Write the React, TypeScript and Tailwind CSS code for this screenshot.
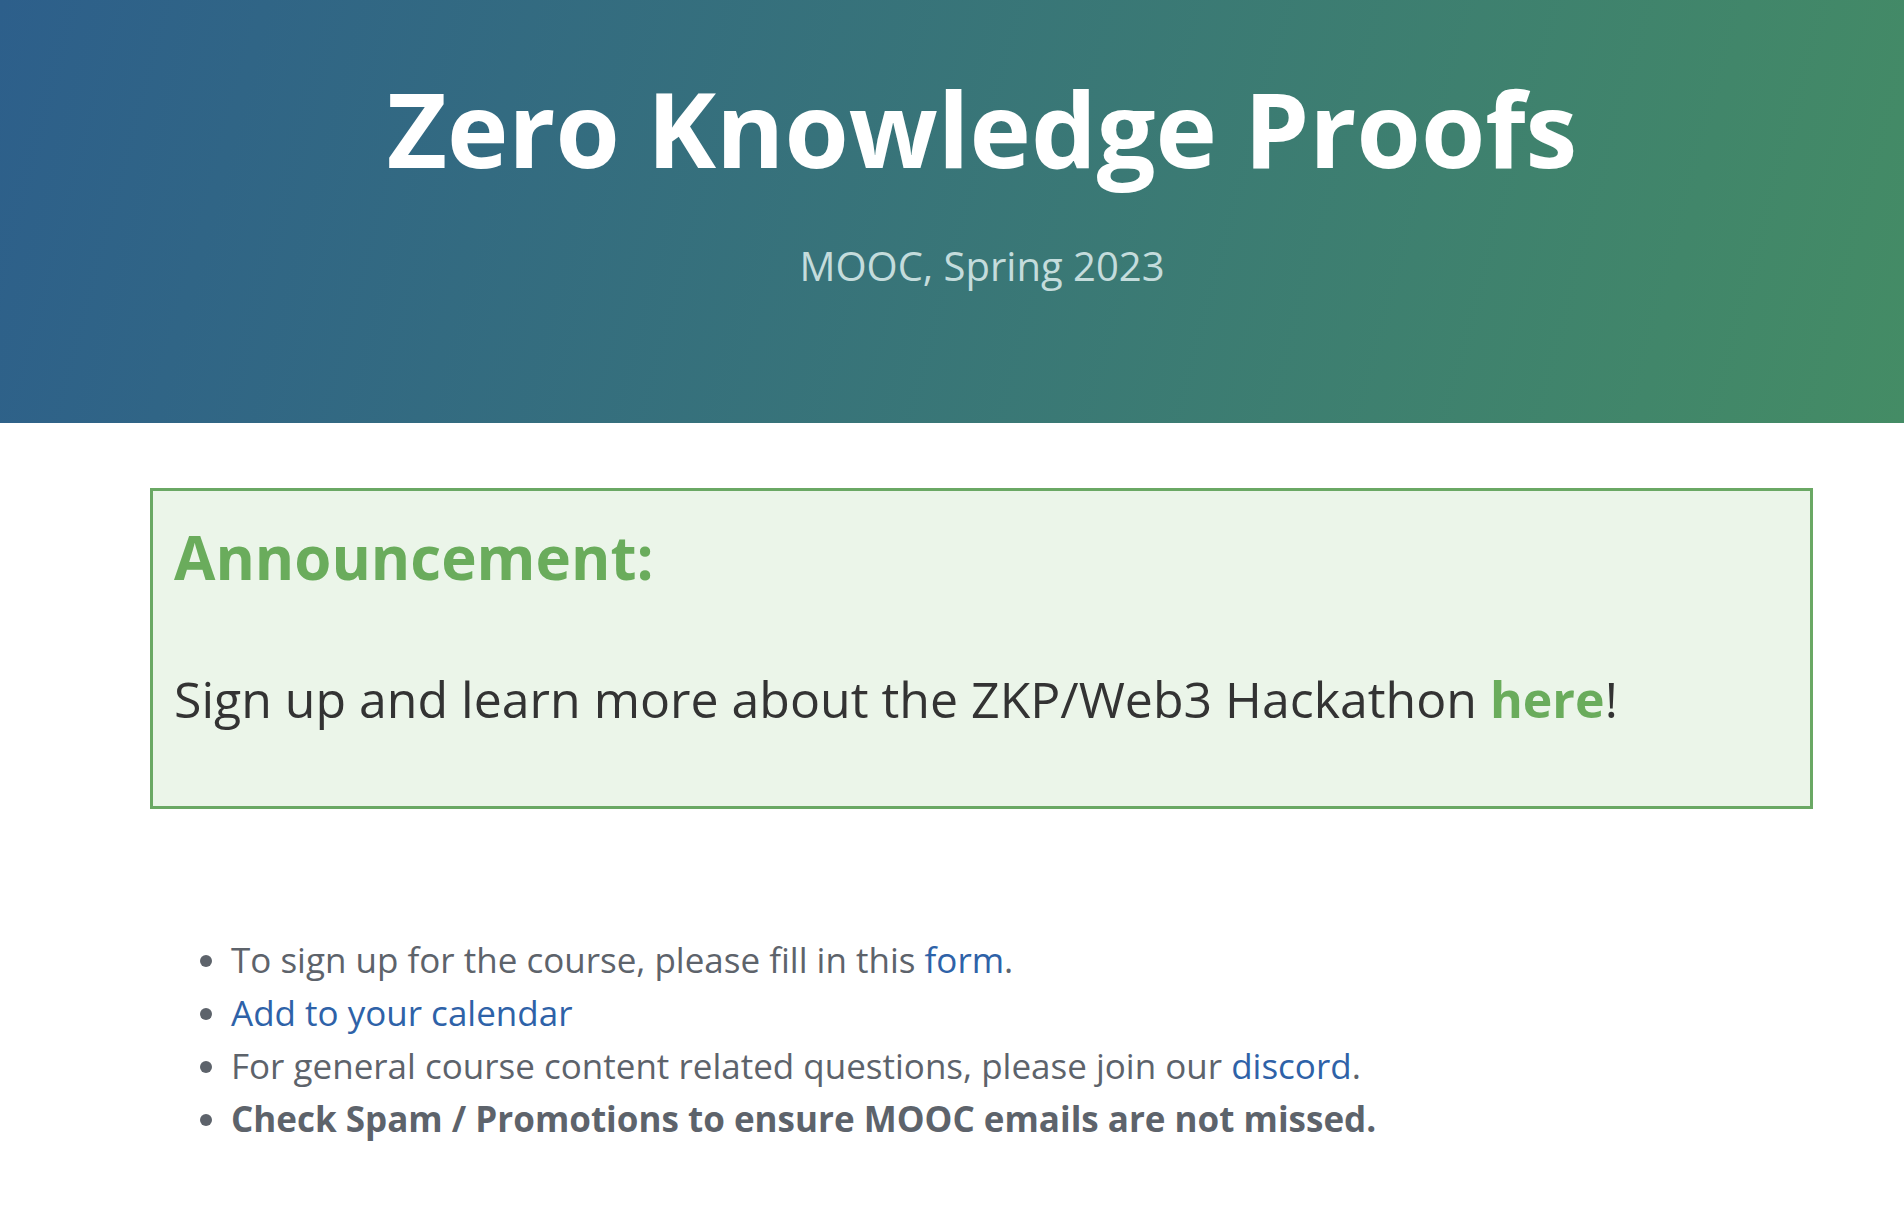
export default function App() {
    const font = { fontFamily: '"Open Sans", "Noto Sans", sans-serif' };

    return (
        <div className="min-h-screen bg-white" style={font}>
            <header className="h-[423px] flex flex-col items-center bg-linear-[105deg] from-[#2d5f8b] to-[#448c65] pt-[65px] pl-[60px]">
                <h1 className="text-[104px] leading-[125px] font-bold text-white">Zero Knowledge Proofs</h1>
                <p className="mt-[46px] text-[40px] leading-[60px] text-[#c4dcdc]">MOOC, Spring 2023</p>
            </header>

            <div className="pl-[150px] pr-[91px] pt-[65px]">
                <div className="border-[3px] border-[#6aa864] bg-[#ebf5e9] pl-[21px] pt-[28px] pb-[71px]">
                    <h2 className="text-[60px] leading-[77px] font-bold text-[#6aac5c]">Announcement:</h2>
                    <p className="mt-[67px] text-[50px] leading-[72px] text-[#333333]">
                        Sign up and learn more about the ZKP/Web3 Hackathon{" "}
                        <a href="#" className="font-bold text-[#6aac5c]">
                            here
                        </a>
                        !
                    </p>
                </div>
            </div>

            <ul className="list-disc pl-[231px] mt-[124px] text-[35px] leading-[53px] text-[#5d636b] marker:text-[#5d636b]">
                <li>
                    To sign up for the course, please fill in this{" "}
                    <a href="#" className="text-[#2e62a8]">
                        form
                    </a>
                    .
                </li>
                <li>
                    <a href="#" className="text-[#2e62a8]">
                        Add to your calendar
                    </a>
                </li>
                <li>
                    For general course content related questions, please join our{" "}
                    <a href="#" className="text-[#2e62a8]">
                        discord
                    </a>
                    .
                </li>
                <li className="font-bold">Check Spam / Promotions to ensure MOOC emails are not missed.</li>
            </ul>
        </div>
    );
}
